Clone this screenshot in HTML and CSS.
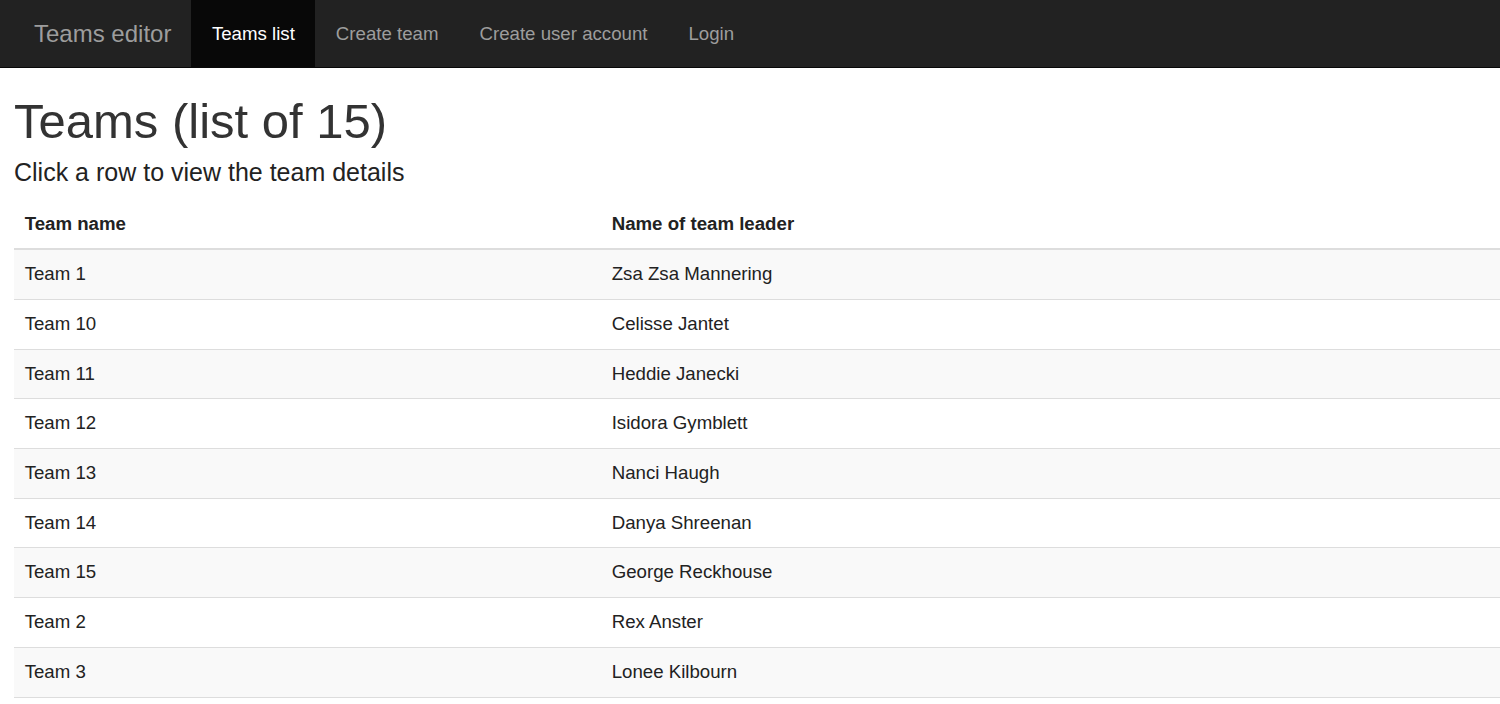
FILE: index.html
```html
<!DOCTYPE html>
<html lang="en">
<head>
<meta charset="utf-8">
<title>Teams editor</title>
<link rel="stylesheet" href="styles.css">
</head>
<body>
<nav class="navbar">
  <a class="brand" href="#">Teams editor</a>
  <ul class="nav">
    <li class="active"><a href="#">Teams list</a></li>
    <li><a href="#">Create team</a></li>
    <li><a href="#">Create user account</a></li>
    <li><a href="#">Login</a></li>
  </ul>
</nav>
<main class="content">
  <h1 class="title">Teams (list of 15)</h1>
  <h4 class="subtitle">Click a row to view the team details</h4>
  <table class="table">
    <thead>
      <tr><th class="col-name">Team name</th><th>Name of team leader</th></tr>
    </thead>
    <tbody>
      <tr><td>Team 1</td><td>Zsa Zsa Mannering</td></tr>
      <tr><td>Team 10</td><td>Celisse Jantet</td></tr>
      <tr><td>Team 11</td><td>Heddie Janecki</td></tr>
      <tr><td>Team 12</td><td>Isidora Gymblett</td></tr>
      <tr><td>Team 13</td><td>Nanci Haugh</td></tr>
      <tr><td>Team 14</td><td>Danya Shreenan</td></tr>
      <tr><td>Team 15</td><td>George Reckhouse</td></tr>
      <tr><td>Team 2</td><td>Rex Anster</td></tr>
      <tr><td>Team 3</td><td>Lonee Kilbourn</td></tr>
    </tbody>
  </table>
</main>
</body>
</html>
```
FILE: styles.css
```css
* { box-sizing: border-box; }
html, body { margin: 0; padding: 0; }
body {
  font-family: "Liberation Sans", Arial, Helvetica, sans-serif;
  font-size: 18.67px;
  line-height: 26.67px;
  color: #333;
  background: #fff;
  overflow: hidden;
}
a { text-decoration: none; }

.navbar {
  display: flex;
  align-items: stretch;
  height: 68px;
  background: #222;
  border-bottom: 1.33px solid #080808;
  padding-left: 14px;
}
.brand {
  display: block;
  padding: 21px 20px 0 20px;
  font-size: 24px;
  line-height: 26.67px;
  color: #9d9d9d;
}
.nav {
  display: flex;
  list-style: none;
  margin: 0;
  padding: 0;
}
.nav li a {
  display: block;
  padding: 21px 20.5px 19px;
  height: 66.67px;
  line-height: 26.67px;
  color: #9d9d9d;
}
.nav li.active a {
  color: #fff;
  background: #080808;
}

.content {
  padding-left: 14px;
}
.title {
  margin: 26px 0 0 0;
  font-size: 49px;
  line-height: 54px;
  font-weight: 500;
  color: #333;
}
.subtitle {
  margin: 11px 0 0 0;
  font-size: 25px;
  line-height: 27.5px;
  font-weight: 500;
  color: #222;
}
.table {
  width: 100%;
  margin-top: 13px;
  border-collapse: collapse;
  border-spacing: 0;
}
.table th, .table td {
  text-align: left;
  padding: 11px 10.67px;
  line-height: 26.7px;
  vertical-align: top;
}
.table th {
  font-weight: bold;
  color: #222;
  border-bottom: 2.67px solid #ddd;
}
.table td {
  border-top: 1px solid #ddd;
  color: #222;
}
.table tbody tr:last-child td { border-bottom: 1px solid #ddd; }
.col-name { width: 587px; }
.table tbody tr:nth-child(odd) { background: #f9f9f9; }
```
